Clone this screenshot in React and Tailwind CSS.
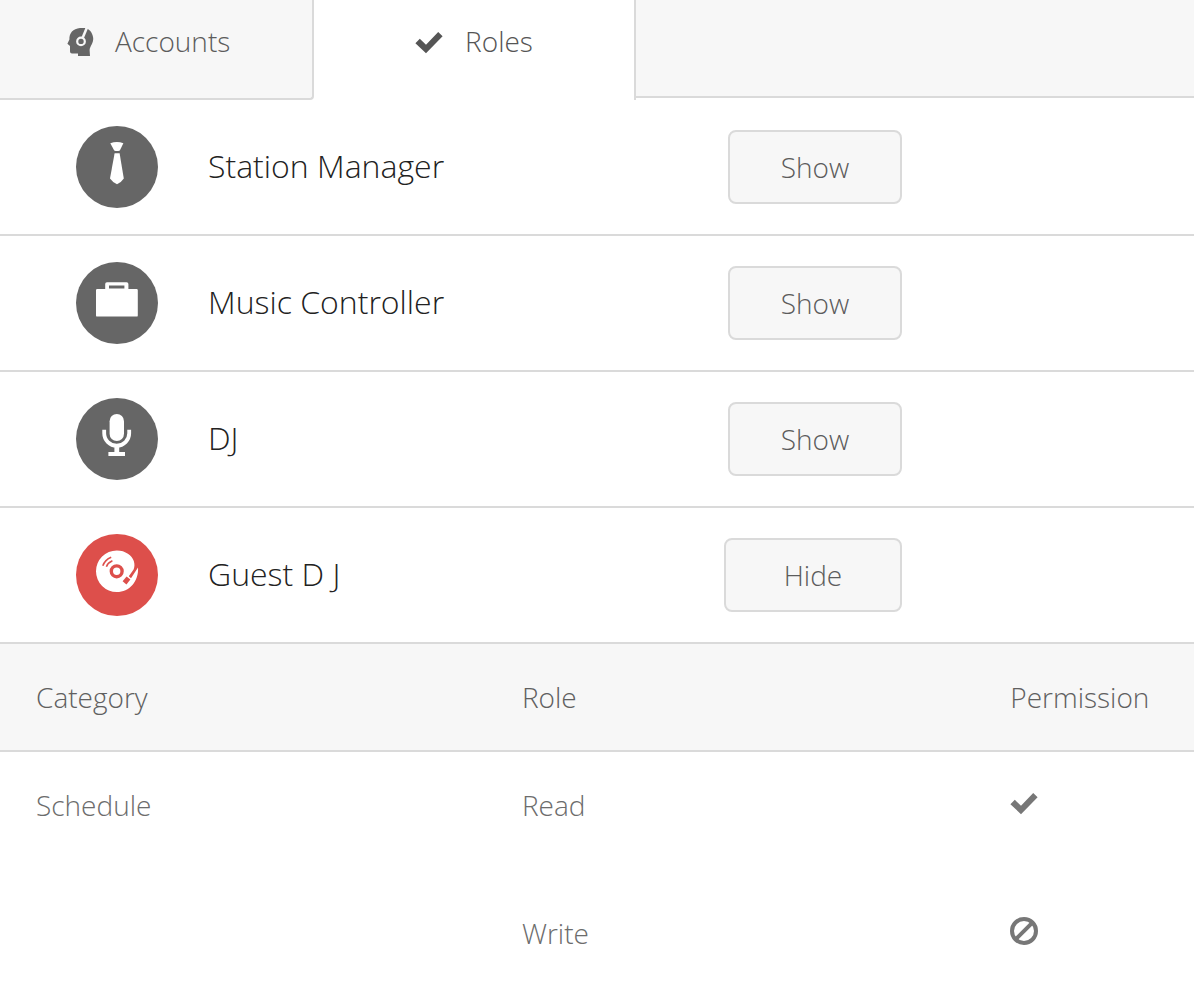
import React, { useState } from 'react';

const roles = [
    { id: 'manager', name: 'Station Manager', icon: TieIcon },
    { id: 'music', name: 'Music Controller', icon: BriefcaseIcon },
    { id: 'dj', name: 'DJ', icon: MicIcon },
    { id: 'guest', name: 'Guest D J', icon: DiscIcon },
];

const permissions = [
    { category: 'Schedule', role: 'Read', allowed: true },
    { category: '', role: 'Write', allowed: false },
];

function TieIcon() {
    return (
        <svg viewBox="0 0 82 82" className="size-full" fill="white" aria-hidden="true">
            <path d="M34.3 17.2Q41 15 47.4 17.2L43.8 24.4Q41 25.8 38.2 24.4Z" />
            <path d="M38.6 27.2H43.6L47.8 52.4Q45 56.6 41 58.2Q37 56.6 34 52.4Z" />
        </svg>
    );
}

function BriefcaseIcon() {
    return (
        <svg viewBox="0 0 82 82" className="size-full" fill="white" aria-hidden="true">
            <path
                fillRule="evenodd"
                d="M31 20.2H50.6Q52.4 20.2 52.4 22V27H60.6Q61.8 27 61.8 28.2V53.4Q61.8 54.6 60.6 54.6H21.2Q20 54.6 20 53.4V28.2Q20 27 21.2 27H29.2V22Q29.2 20.2 31 20.2ZM33 23.4V26.6H48.4V23.4Z"
            />
        </svg>
    );
}

function MicIcon() {
    return (
        <svg viewBox="0 0 82 82" className="size-full" fill="white" aria-hidden="true">
            <rect x="33.6" y="16" width="14.4" height="27" rx="7.2" />
            <path d="M28.2 31.8V35.2A12.5 12.5 0 0 0 53.2 35.2V31.8" fill="none" stroke="white" strokeWidth="3.8" />
            <path d="M38.4 48H43.2V54H49V58H32.4V54H38.4Z" />
        </svg>
    );
}

function DiscIcon() {
    return (
        <svg viewBox="0 0 82 82" className="size-full" fill="none" aria-hidden="true">
            <path
                fill="white"
                d="M40.8 16.4C49.6 16.4 56 21.4 57.8 27C58.8 30.4 58.6 33 57.6 35.4L52.8 42.2L55 44.2L62 33.4C63 47 53.4 58 40.8 58A20.8 20.8 0 0 1 40.8 16.4Z"
            />
            <circle cx="40.7" cy="37.3" r="5.4" stroke="#dd4f4b" strokeWidth="3.4" />
            <path d="M26.8 31.8Q29 25.6 35.2 23.2M30.4 32.8Q32 28.6 36.4 26.8" stroke="#dd4f4b" strokeWidth="1.6" />
            <path d="M50.6 42.4L54.4 45.6L50.4 50.4L46.6 47.2Z" fill="#dd4f4b" />
        </svg>
    );
}

function HeadIcon() {
    return (
        <svg viewBox="0 0 28 28" className="size-7" aria-hidden="true">
            <path
                fill="#666666"
                d="M13 0H18C22 0.6 25.6 4.4 26.2 10C26.6 15 23 18 22.6 22L23 28H11V25.4H5Q3 25.4 3 23.4V18L0.4 15.8L2.4 11.6C2.2 5 6 0.6 13 0Z"
            />
            <circle cx="14" cy="13.4" r="3.8" fill="#666666" stroke="#f7f7f7" strokeWidth="2.2" />
            <path d="M15.8 9.4L20 -0.6" stroke="#f7f7f7" strokeWidth="2.6" />
        </svg>
    );
}

function CheckIcon() {
    return (
        <svg viewBox="0 0 28 28" className="size-7" fill="currentColor" aria-hidden="true">
            <path d="M0.4 15.2L4.8 10.8L11 16.8L23.2 4L27.6 8.2L11 25.2Z" />
        </svg>
    );
}

function BanIcon() {
    return (
        <svg viewBox="0 0 28 28" className="size-7" fill="none" stroke="currentColor" strokeWidth="4" aria-hidden="true">
            <circle cx="14" cy="14" r="12" />
            <path d="M5.6 22.4L22.4 5.6" />
        </svg>
    );
}

function RoleRow({ role, open, onToggle }) {
    const Icon = role.icon;

    return (
        <li className="flex items-center border-b-2 border-[#dadada] py-[26px] pr-[292px] pl-[76px]">
            <span className={`size-[82px] shrink-0 rounded-full ${open ? 'bg-[#dd4f4b]' : 'bg-[#666666]'}`}>
                <Icon />
            </span>
            <h2 className="ml-[50px] flex-1 pb-0.5 text-[32px] leading-10 text-[#222222]">{role.name}</h2>
            <button
                type="button"
                onClick={onToggle}
                className={`h-[74px] rounded-lg border-2 border-[#dadada] bg-[#f7f7f7] text-[28px] text-[#5c5c5c] ${open ? 'w-[178px]' : 'w-[174px]'}`}
            >
                {open ? 'Hide' : 'Show'}
            </button>
        </li>
    );
}

function PermissionTable() {
    return (
        <table className="w-full table-fixed text-left text-[28px] leading-10 text-[#6c6c6c]">
            <thead>
                <tr className="border-b-2 border-[#dadada] bg-[#f7f7f7] text-[#606060]">
                    <th className="w-[40.7%] py-[33px] pl-9 font-light">Category</th>
                    <th className="w-[40.9%] py-[33px] pl-9 font-light">Role</th>
                    <th className="py-[33px] pl-9 font-light">Permission</th>
                </tr>
            </thead>
            <tbody>
                {permissions.map((item) => (
                    <tr key={item.role} className="group align-top">
                        <td className="pt-[33px] pb-[55px] pl-9 group-last:pb-9">{item.category}</td>
                        <td className="pt-[33px] pb-[55px] pl-9 group-last:pb-9">{item.role}</td>
                        <td className="pt-[37px] pl-9 text-[#777777]" aria-label={item.allowed ? 'Allowed' : 'Denied'}>
                            {item.allowed ? <CheckIcon /> : <BanIcon />}
                        </td>
                    </tr>
                ))}
            </tbody>
        </table>
    );
}

function App() {
    const [openRole, setOpenRole] = useState('guest');

    return (
        <main className="bg-white font-['Open_Sans',sans-serif] font-light">
            <nav className="flex h-[100px] items-start text-[28px] leading-10">
                <button
                    type="button"
                    className="flex h-full w-[314px] items-start gap-5 rounded-br border-r-2 border-b-2 border-[#dadada] bg-[#f7f7f7] pt-[21px] pl-[67px] text-[#5c5c5c]"
                >
                    <span className="pt-[7px]"><HeadIcon /></span>
                    Accounts
                </button>
                <button type="button" className="flex h-full w-[322px] items-start justify-center gap-[22px] border-r-2 border-[#dadada] pt-[21px] text-[#555555]">
                    <span className="pt-[7px]"><CheckIcon /></span>
                    Roles
                </button>
                <div className="h-[98px] flex-1 border-b-2 border-[#dadada] bg-[#f7f7f7]" />
            </nav>
            <ul>
                {roles.map((role) => (
                    <RoleRow
                        key={role.id}
                        role={role}
                        open={openRole === role.id}
                        onToggle={() => setOpenRole(openRole === role.id ? null : role.id)}
                    />
                ))}
            </ul>
            {openRole && <PermissionTable />}
        </main>
    );
}

export default App;
